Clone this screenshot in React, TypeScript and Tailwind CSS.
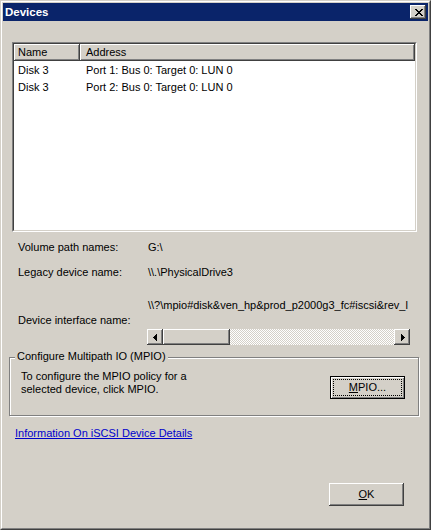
import React from "react";

function Arrow({ dir }: { dir: "left" | "right" }) {
  return (
    <svg width="4" height="7" viewBox="0 0 4 7" shapeRendering="crispEdges">
      {dir === "left" ? (
        <path d="M3 0h1v7h-1zM2 1h1v5h-1zM1 2h1v3h-1zM0 3h1v1h-1z" fill="#000" />
      ) : (
        <path d="M0 0h1v7h-1zM1 1h1v5h-1zM2 2h1v3h-1zM3 3h1v1h-1z" fill="#000" />
      )}
    </svg>
  );
}

function CloseGlyph() {
  return (
    <svg width="8" height="7" viewBox="0 0 8 7" shapeRendering="crispEdges">
      <path
        d="M0 0h2v1h-2zM6 0h2v1h-2zM1 1h2v1h-2zM5 1h2v1h-2zM2 2h4v1h-4zM3 3h2v1h-2zM2 4h4v1h-4zM1 5h2v1h-2zM5 5h2v1h-2zM0 6h2v1h-2zM6 6h2v1h-2z"
        fill="#000"
      />
    </svg>
  );
}

const rows = [
  { name: "Disk 3", address: "Port 1: Bus 0: Target 0: LUN 0" },
  { name: "Disk 3", address: "Port 2: Bus 0: Target 0: LUN 0" },
];

export default function App() {
  return (
    <div className="h-[530px] w-[431px] border border-b-[#404040] border-l-[#d4d0c8] border-r-[#404040] border-t-[#d4d0c8] bg-[#d4d0c8] font-['Liberation_Sans',Arial,sans-serif] text-[11px] leading-[13px] text-black">
      <div className="flex h-full flex-col border border-b-[#808080] border-l-white border-r-[#808080] border-t-white p-px">
        {/* title bar */}
        <div className="flex h-[18px] shrink-0 items-center justify-between bg-[#0a246a] pl-[2px] pr-[2px]">
          <span className="text-[11.5px] font-bold text-white">Devices</span>
          <div className="flex h-[14px] w-[16px] items-center justify-center pl-px bg-[#d4d0c8] shadow-[inset_-1px_-1px_0_#404040,inset_1px_1px_0_#ffffff,inset_-2px_-2px_0_#808080]">
            <CloseGlyph />
          </div>
        </div>

        <div className="flex flex-1 flex-col">
          {/* list view */}
          <div className="ml-[9px] mt-[21px] h-[190px] w-[405px] border border-b-white border-l-[#808080] border-r-white border-t-[#808080]">
            <div className="h-full border border-b-[#d4d0c8] border-l-[#404040] border-r-[#d4d0c8] border-t-[#404040] bg-white">
              <div className="flex h-[17px] bg-[#d4d0c8]">
                <div className="flex w-[66px] items-center pl-[4px] shadow-[inset_-1px_-1px_0_#404040,inset_1px_1px_0_#ffffff,inset_-2px_-2px_0_#808080]">
                  Name
                </div>
                <div className="flex flex-1 items-center pl-[6px] shadow-[inset_-1px_-1px_0_#404040,inset_1px_1px_0_#ffffff,inset_-2px_-2px_0_#808080]">
                  Address
                </div>
              </div>
              <div className="pt-px">
                {rows.map((r, i) => (
                  <div key={i} className="flex h-[17px] items-center">
                    <div className="w-[66px] pl-[4px]">{r.name}</div>
                    <div className="pl-[6px]">{r.address}</div>
                  </div>
                ))}
              </div>
            </div>
          </div>

          {/* properties */}
          <div className="mt-[9px] flex pl-[15px]">
            <div className="w-[129px]">Volume path names:</div>
            <div className="pl-px">G:\</div>
          </div>
          <div className="mt-[12px] flex pl-[15px]">
            <div className="w-[129px]">Legacy device name:</div>
            <div className="pl-px">\\.\PhysicalDrive3</div>
          </div>
          <div className="mt-[20px] flex pl-[15px]">
            <div className="w-[129px] pt-[15px]">Device interface name:</div>
            <div className="flex w-[263px] flex-col">
              <div className="overflow-hidden whitespace-nowrap pl-px">
                \\?\mpio#disk&amp;ven_hp&amp;prod_p2000g3_fc#iscsi&amp;rev_l
              </div>
              <div className="mt-[17px] flex h-[16px]">
                <div className="flex w-[16px] items-center justify-center bg-[#d4d0c8] shadow-[inset_-1px_-1px_0_#404040,inset_1px_1px_0_#ffffff,inset_-2px_-2px_0_#808080]">
                  <Arrow dir="left" />
                </div>
                <div className="w-[67px] bg-[#d4d0c8] shadow-[inset_-1px_-1px_0_#404040,inset_1px_1px_0_#ffffff,inset_-2px_-2px_0_#808080]" />
                <div className="flex-1 bg-[repeating-conic-gradient(#d4d0c8_0_25%,#ffffff_0_50%)] bg-[length:2px_2px]" />
                <div className="flex w-[16px] items-center justify-center pl-px bg-[#d4d0c8] shadow-[inset_-1px_-1px_0_#404040,inset_1px_1px_0_#ffffff,inset_-2px_-2px_0_#808080]">
                  <Arrow dir="right" />
                </div>
              </div>
            </div>
          </div>

          {/* group box */}
          <div className="relative ml-[6px] mt-[12px] flex h-[59px] w-[410px] items-start justify-between border border-[#808080] shadow-[inset_1px_1px_0_#ffffff,1px_1px_0_#ffffff]">
            <span className="absolute left-[5px] top-[-8px] bg-[#d4d0c8] px-[2px]">
              Configure Multipath IO (MPIO)
            </span>
            <div className="pl-[11px] pt-[12px]">
              To configure the MPIO policy for a
              <br />
              selected device, click MPIO.
            </div>
            <div className="mr-[13px] mt-[18px] flex h-[23px] w-[75px] border border-black bg-[#d4d0c8] p-[2px] shadow-[inset_1px_1px_0_#ffffff,inset_-1px_-1px_0_#808080]">
              <div className="flex flex-1 items-center justify-center border border-dotted border-black">
                <span>
                  <span className="underline">M</span>PIO...
                </span>
              </div>
            </div>
          </div>

          <div className="ml-[12px] mt-[11px]">
            <span className="text-[#0000cc] underline">Information On iSCSI Device Details</span>
          </div>

          <div className="mb-[21px] mr-[24px] mt-auto flex h-[23px] w-[75px] items-center justify-center self-end bg-[#d4d0c8] shadow-[inset_-1px_-1px_0_#404040,inset_1px_1px_0_#ffffff,inset_-2px_-2px_0_#808080]">
            <span>
              <span className="underline">O</span>K
            </span>
          </div>
        </div>
      </div>
    </div>
  );
}
